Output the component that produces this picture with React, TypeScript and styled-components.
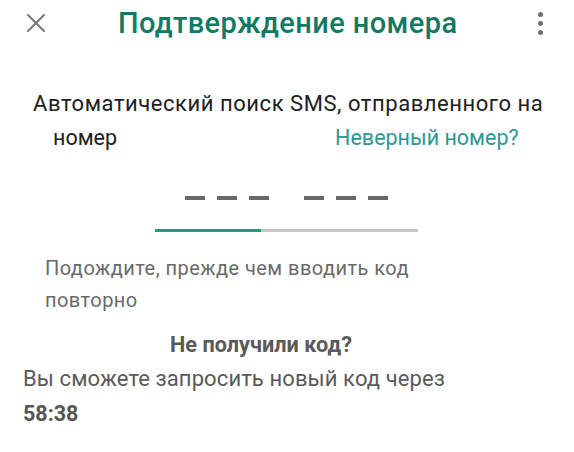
import styled, { createGlobalStyle } from "styled-components";

const GlobalStyle = createGlobalStyle`
  html, body {
    margin: 0;
    padding: 0;
    background: #ffffff;
  }
  body {
    font-family: Roboto, "Noto Sans", "Liberation Sans", sans-serif;
    -webkit-font-smoothing: antialiased;
  }
`;

const Screen = styled.div`
  width: 574px;
  height: 452px;
  background: #fff;
  overflow: hidden;
`;

const Header = styled.header`
  display: flex;
  align-items: center;
  height: 46px;
  padding: 0 0 0 26px;
`;

const CloseButton = styled.button`
  display: flex;
  align-items: center;
  justify-content: center;
  width: 20px;
  height: 20px;
  padding: 0;
  border: none;
  background: none;
`;

const Title = styled.h1`
  margin: 0 0 0 72px;
  font-size: 29px;
  letter-spacing: 0.4px;
  font-weight: 500;
  color: #127a64;
  white-space: nowrap;
  flex: 1;
`;

const MenuDots = styled.div`
  display: flex;
  flex-direction: column;
  gap: 4px;
  width: 6px;
  margin-right: 30px;
  span {
    width: 5px;
    height: 5px;
    border-radius: 50%;
    background: #707070;
  }
`;

const Intro = styled.div`
  margin-top: 41px;
  font-size: 21.5px;
  color: #202020;
  line-height: 34px;
`;

const IntroLine = styled.div<{ $indent: number; $spacing?: number }>`
  display: flex;
  padding-left: ${(p) => p.$indent}px;
  letter-spacing: ${(p) => p.$spacing ?? 0}px;
  font-size: ${(p) => (p.$spacing ? "22px" : "inherit")};
  white-space: nowrap;
`;

const WrongNumber = styled.a`
  margin-left: 218px;
  color: #2f9696;
  text-decoration: none;
`;

const CodeRow = styled.div`
  display: flex;
  align-items: center;
  gap: 35px;
  margin-top: 41px;
  padding-left: 185px;
`;

const DashGroup = styled.div`
  display: flex;
  gap: 12px;
`;

const Dash = styled.span`
  width: 20px;
  height: 4px;
  background: #676767;
`;

const Progress = styled.div`
  margin: 29px 0 0 155px;
  width: 263px;
  height: 3px;
  background: #c6c6c6;
`;

const ProgressFill = styled.div`
  height: 100%;
  background: #17a086;
`;

const Hint = styled.p`
  margin: 20px 0 0 45px;
  width: 450px;
  font-size: 20px;
  letter-spacing: 0.45px;
  line-height: 32px;
  color: #6a6a6a;
`;

const ResendTitle = styled.h2`
  margin: 14px 0 0 170px;
  font-size: 21.7px;
  font-weight: 700;
  color: #5a5a5a;
  line-height: 30px;
`;

const ResendText = styled.p`
  margin: 3px 0 0 23px;
  font-size: 22px;
  letter-spacing: 0.1px;
  line-height: 32px;
  color: #5a5a5a;
`;

const Timer = styled.div`
  margin: 2px 0 0 23px;
  font-size: 21.5px;
  font-weight: 700;
  color: #555;
  line-height: 34px;
`;

export default function App() {
  const progress = 0.403;
  return (
    <>
      <GlobalStyle />
      <Screen>
        <Header>
          <CloseButton aria-label="Закрыть">
            <svg width="20" height="20" viewBox="0 0 20 20">
              <path
                d="M2 2 L18 18 M18 2 L2 18"
                stroke="#777"
                strokeWidth="2"
                strokeLinecap="round"
              />
            </svg>
          </CloseButton>
          <Title>Подтверждение номера</Title>
          <MenuDots>
            <span />
            <span />
            <span />
          </MenuDots>
        </Header>

        <Intro>
          <IntroLine $indent={33} $spacing={0.55}>
            Автоматический поиск SMS, отправленного на
          </IntroLine>
          <IntroLine $indent={53}>
            номер
            <WrongNumber href="#">Неверный номер?</WrongNumber>
          </IntroLine>
        </Intro>

        <CodeRow>
          <DashGroup>
            <Dash />
            <Dash />
            <Dash />
          </DashGroup>
          <DashGroup>
            <Dash />
            <Dash />
            <Dash />
          </DashGroup>
        </CodeRow>

        <Progress>
          <ProgressFill style={{ width: `${progress * 100}%` }} />
        </Progress>

        <Hint>Подождите, прежде чем вводить код повторно</Hint>

        <ResendTitle>Не получили код?</ResendTitle>
        <ResendText>Вы сможете запросить новый код через</ResendText>
        <Timer>58:38</Timer>
      </Screen>
    </>
  );
}
